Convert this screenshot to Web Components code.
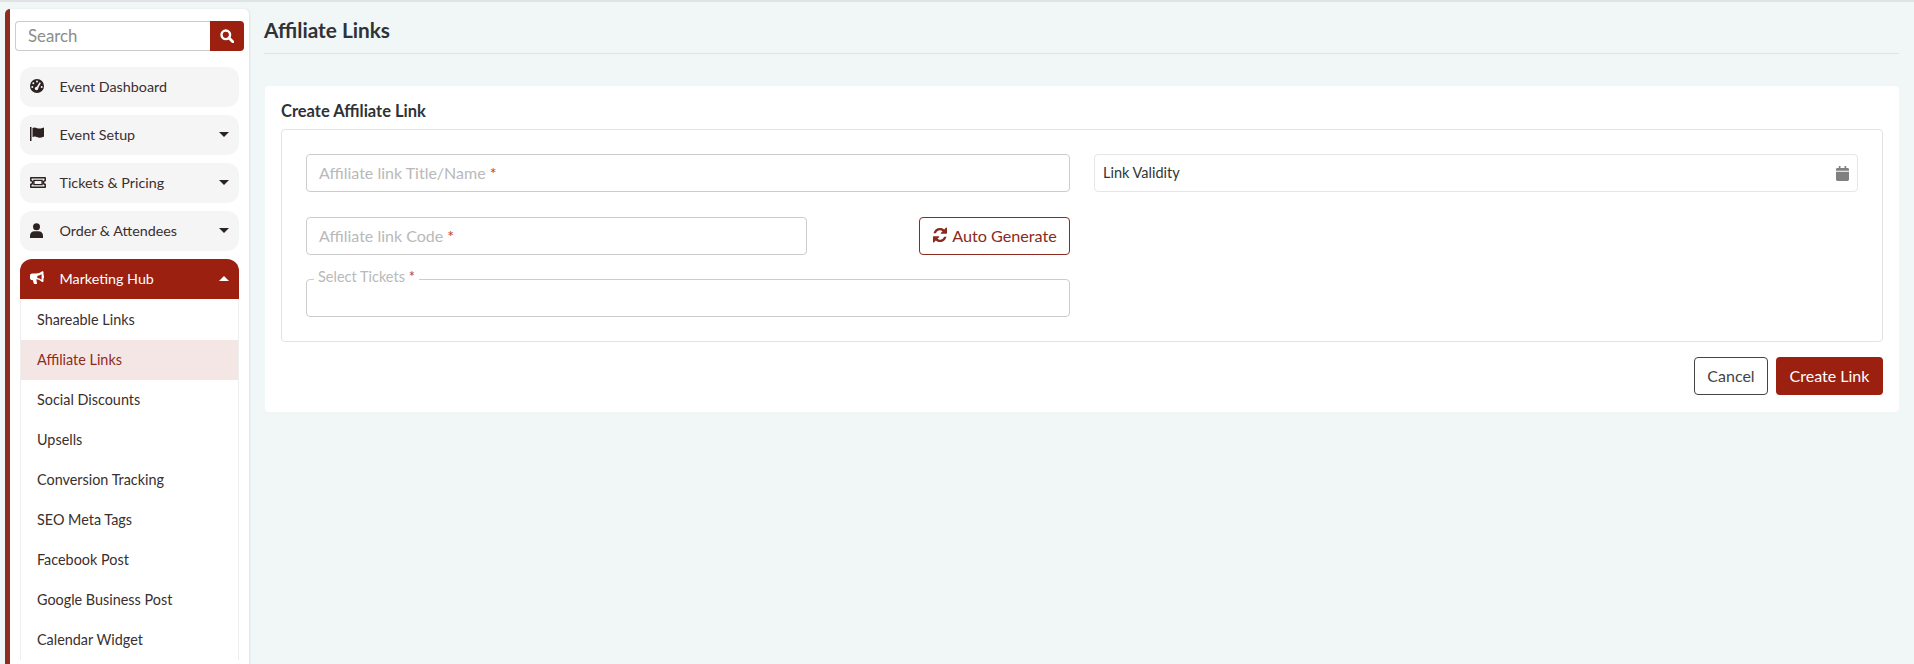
<!DOCTYPE html>
<html><head><meta charset="utf-8">
<style>
html,body{margin:0;height:664px;overflow:hidden;background:#f1f6f6;font-family:Lato,"Noto Sans",sans-serif;color:#333}
</style></head><body>
<app-shell>
  <side-nav slot="side">
    <search-box></search-box>
    <nav-item icon="gauge">Event Dashboard</nav-item>
    <nav-item icon="flag" caret="down">Event Setup</nav-item>
    <nav-item icon="ticket" caret="down">Tickets &amp; Pricing</nav-item>
    <nav-item icon="user" caret="down">Order &amp; Attendees</nav-item>
    <nav-group>
      <nav-item slot="head" icon="bullhorn" caret="up" open>Marketing Hub</nav-item>
      <sub-item>Shareable Links</sub-item>
      <sub-item active>Affiliate Links</sub-item>
      <sub-item>Social Discounts</sub-item>
      <sub-item>Upsells</sub-item>
      <sub-item>Conversion Tracking</sub-item>
      <sub-item>SEO Meta Tags</sub-item>
      <sub-item>Facebook Post</sub-item>
      <sub-item>Google Business Post</sub-item>
      <sub-item>Calendar Widget</sub-item>
    </nav-group>
  </side-nav>
  <page-title>Affiliate Links</page-title>
  <form-card heading="Create Affiliate Link">
    <text-field style="grid-area:a" label="Affiliate link Title/Name"></text-field>
    <date-field style="grid-area:b">Link Validity</date-field>
    <code-row style="grid-area:c"></code-row>
    <select-field style="grid-area:d" label="Select Tickets"></select-field>
    <app-button slot="actions" variant="outline" style="width:74px">Cancel</app-button>
    <app-button slot="actions" variant="primary" style="width:107px">Create Link</app-button>
  </form-card>
</app-shell>
<script>
const ICONS={
 gauge:'<svg viewBox="0 0 14 14" width="14" height="14"><circle cx="7" cy="7" r="7" fill="currentColor"/><g fill="#f5f5f5"><circle cx="7" cy="2.500" r="1"/><circle cx="3.300" cy="4.200" r="1"/><circle cx="2.300" cy="8" r="1"/><circle cx="11.700" cy="8" r="1"/><circle cx="6.500" cy="9.500" r="1.700"/><path d="M5.900 9.200 9.600 3.300l1.200.7-3.200 6.200z"/></g></svg>',
 flag:'<svg viewBox="0 0 14 14" width="14" height="14"><path fill="currentColor" d="M0 0h1.500v14H0z"/><path fill="currentColor" d="M2.500 1c1.500-.8 2.900-.8 4.200 0 1.500.8 3.200.8 6.300-.3.500-.2 1 0 1 .5v8c0 .3-.1.500-.4.600-3 1.200-5 1.200-6.700.3-1.300-.7-2.700-.7-4.400 0z"/></svg>',
 ticket:'<svg viewBox="0 0 16 11" width="16" height="11"><path fill="none" stroke="currentColor" stroke-width="1.500" stroke-linejoin="round" d="M.8.800h14.400v2.900a1.800 1.800 0 0 0 0 3.600v2.900H.8V7.300a1.800 1.800 0 0 0 0-3.600z"/><path fill="none" stroke="currentColor" stroke-width="1.400" d="M3.900 3.400h8.200v4.200H3.900z"/></svg>',
 user:'<svg viewBox="0 0 13 15" width="13" height="15"><circle cx="6.500" cy="3.700" r="3.500" fill="currentColor"/><path fill="currentColor" d="M0 15v-2.200C0 10.200 1.900 8.300 4.500 8.300h4c2.600 0 4.500 1.900 4.500 4.500V15z"/></svg>',
 bullhorn:'<svg viewBox="0 0 14 14" width="14" height="14"><path fill="currentColor" d="M12.500.3c.6 0 1 .4 1 1v2.900a1.500 1.500 0 0 1 0 2.800v3c0 .6-.4 1-1 1-.3 0-.5-.1-.7-.3-1.700-1.500-3.500-2.300-5.500-2.500l.7 4.100c.1.400-.2.700-.6.700H4.500c-.4 0-.6-.2-.7-.5L2.700 9H2.100C.9 9 0 8.100 0 6.900V4.700C0 3.500.9 2.600 2.100 2.600h3.700c2.400 0 4.500-.9 6-2 .2-.2.400-.3.700-.3zM11.600 3.300c-1.300.9-2.800 1.500-4.300 1.700v2c1.500.2 3 .8 4.300 1.700z"/></svg>'
};
const def=(n,html)=>customElements.define(n,class extends HTMLElement{
  connectedCallback(){ if(this.shadowRoot)return; this.attachShadow({mode:'open'}).innerHTML=html; }
});
def('app-shell',`<style>
:host{display:grid;grid-template-columns:244px 1fr;column-gap:15px;padding:9px 15px 0 5px;height:664px;overflow:hidden;box-sizing:border-box;position:relative}
:host::before{content:"";position:absolute;left:0;right:0;top:0;height:2px;background:#dfe3e4}
main{min-width:0;display:block}
</style><slot name="side"></slot><main><slot></slot></main>`);
def('side-nav',`<style>
:host{display:block;background:#fff;border-left:5px solid #8f2c20;border-radius:5px 5px 0 0;height:900px;box-sizing:border-box;padding:12px 5px 0 5px;box-shadow:1px 0 2px rgba(0,0,0,.08)}
.list{display:flex;flex-direction:column;gap:8px;padding:16px 5px 0}
</style><div class="list"><slot></slot></div>`);
def('search-box',`<style>
 :host{display:flex;height:30px;margin:-16px -5px 8px}
 .in{flex:1;border:1px solid #ccc;border-right:0;border-radius:4px 0 0 4px;padding:0 12px;font-size:16.800px;line-height:27px;color:#8c8c8c;box-sizing:border-box}
 .btn{width:34px;background:#9b2010;color:#fff;border-radius:0 4px 4px 0;display:flex;align-items:center;justify-content:center}
 </style><div class="in">Search</div><div class="btn"><svg viewBox="0 0 14 14" width="14" height="14"><circle cx="5.800" cy="5.800" r="4.300" fill="none" stroke="#fff" stroke-width="2.400"/><path d="M9 9l3.800 3.800" stroke="#fff" stroke-width="2.800" stroke-linecap="round"/></svg></div>`);
customElements.define('nav-item',class extends HTMLElement{connectedCallback(){
 const c=this.getAttribute('caret');
 this.attachShadow({mode:'open'}).innerHTML=`<style>
 :host{display:flex;align-items:center;height:40px;background:#f5f5f5;border-radius:12px;color:#3a2f2e;font-size:14.300px;box-sizing:border-box;padding:0 10px 2px}
 :host([open]){background:#9b2010;color:#fff;border-radius:12px 12px 0 0}
 .i{width:16px;height:16px;margin-right:13.500px;display:flex;align-items:center;justify-content:flex-start;flex:none;color:#2c2222}
 :host([open]) .i{color:#fff}
 .t{flex:1}
 .c{width:0;height:0;border-left:5px solid transparent;border-right:5px solid transparent}
 .down{border-top:5.500px solid #2c2222}.up{border-bottom:5.500px solid #fff}
 </style><span class="i">${ICONS[this.getAttribute('icon')]}</span><span class="t"><slot></slot></span>${c?`<span class="c ${c}"></span>`:''}`;
}});
def('nav-group',`<style>:host{display:block}.b{border:1px solid #eee;border-top:1px solid #fff;border-bottom:0;background:#fff}</style><slot name="head"></slot><div class="b"><slot></slot></div>`);
def('sub-item',`<style>:host{display:flex;align-items:center;height:40px;padding:0 0 2px 16px;box-sizing:border-box;font-size:14.400px;color:#3a2f2e}:host([active]){background:#f5e6e6;color:#8f2c20}</style><slot></slot>`);
def('page-title',`<style>:host{display:block;height:44px;border-bottom:1px solid #dde3e8;font-size:20.800px;font-weight:700;color:#2f3236;line-height:42px}</style><slot></slot>`);
customElements.define('form-card',class extends HTMLElement{connectedCallback(){
 this.attachShadow({mode:'open'}).innerHTML=`<style>
 :host{display:block;background:#fff;border-radius:4px;margin:32px 0 0 1px;padding:16px 16px 16px;height:326px;box-sizing:border-box}
 h3{margin:0;font-size:16.500px;font-weight:700;color:#2f3236;line-height:18px;height:27px}
 .box{border:1px solid #e3e3e3;border-radius:4px;padding:24px;height:213px;box-sizing:border-box;display:grid;grid-template-columns:1fr 1fr;column-gap:24px;grid-template-rows:38px 38px 38px;row-gap:25px;grid-template-areas:"a b" "c ." "d .";align-content:start}
 .act{display:flex;justify-content:flex-end;gap:8px;margin-top:15px}
 </style><h3>${this.getAttribute('heading')}</h3><div class="box"><slot></slot></div><div class="act"><slot name="actions"></slot></div>`;
}});
const req='<span style="color:#c0392b">*</span>';
customElements.define('text-field',class extends HTMLElement{connectedCallback(){
 this.attachShadow({mode:'open'}).innerHTML=`<style>:host{display:flex;align-items:center;height:38px;border:1px solid #ccc;border-radius:4px;box-sizing:border-box;padding:0 12px 2px;font-size:16px;color:#b9b9b9;white-space:nowrap}</style>${this.getAttribute('label')}&nbsp;${req}`;
}});
def('date-field',`<style>:host{display:flex;align-items:center;height:38px;border:1px solid #e6e6e6;border-radius:4px;box-sizing:border-box;padding:0 8px 2px;font-size:14.500px;color:#333;justify-content:space-between}
svg{color:#808080;position:relative;top:1px}</style><slot></slot><svg viewBox="0 0 14 16" width="13" height="15"><path fill="currentColor" d="M3 0h1.800v2H9.200V0H11v2h1.500C13.300 2 14 2.700 14 3.500V5H0V3.500C0 2.700.7 2 1.500 2H3zM0 6h14v8.500c0 .8-.7 1.500-1.500 1.500h-11C.7 16 0 15.300 0 14.500z"/></svg>`);
def('code-row',`<style>:host{display:flex;justify-content:space-between}
 text-field{width:501px}
 .g{width:151px;height:38px;border:1px solid #8a2a20;border-radius:4px;box-sizing:border-box;color:#8a2a20;font-size:16.200px;display:flex;align-items:center;justify-content:center;gap:4px;padding-bottom:2px}
 </style><text-field label="Affiliate link Code"></text-field><div class="g"><svg viewBox="0 0 16 16" width="16" height="16"><path fill="currentColor" d="M15 1v5.300c0 .3-.2.500-.5.500H9.200c-.5 0-.7-.5-.4-.9l1.700-1.700A4.200 4.200 0 0 0 3.900 6.300H1.500A6.600 6.600 0 0 1 12.200 2.500L14.100.6c.3-.3.900-.1.900.4zM1 15V9.700c0-.3.2-.5.500-.5h5.300c.5 0 .7.500.4.900l-1.700 1.700a4.200 4.200 0 0 0 6.600-2.100h2.400A6.600 6.600 0 0 1 3.800 13.500l-1.900 1.900c-.3.300-.9.100-.9-.4z"/></svg>Auto Generate</div>`);
customElements.define('select-field',class extends HTMLElement{connectedCallback(){
 this.attachShadow({mode:'open'}).innerHTML=`<style>:host{display:block;height:38px;margin-top:-1px;border:1px solid #ccc;border-radius:4px;box-sizing:border-box;position:relative}
 span.l{position:absolute;left:7px;top:-12px;background:#fff;padding:0 4px;font-size:14.500px;line-height:18px;color:#b9b9b9;white-space:nowrap}</style><span class="l">${this.getAttribute('label')} ${req}</span>`;
}});
def('app-button',`<style>:host{display:flex;align-items:center;justify-content:center;height:38px;border-radius:4px;box-sizing:border-box;font-size:16px;padding:0 0 2px}
 :host([variant=outline]){border:1px solid #444;color:#444;background:#fff}
 :host([variant=primary]){background:#9b2010;color:#fff}</style><slot></slot>`);
</script>
</body></html>
